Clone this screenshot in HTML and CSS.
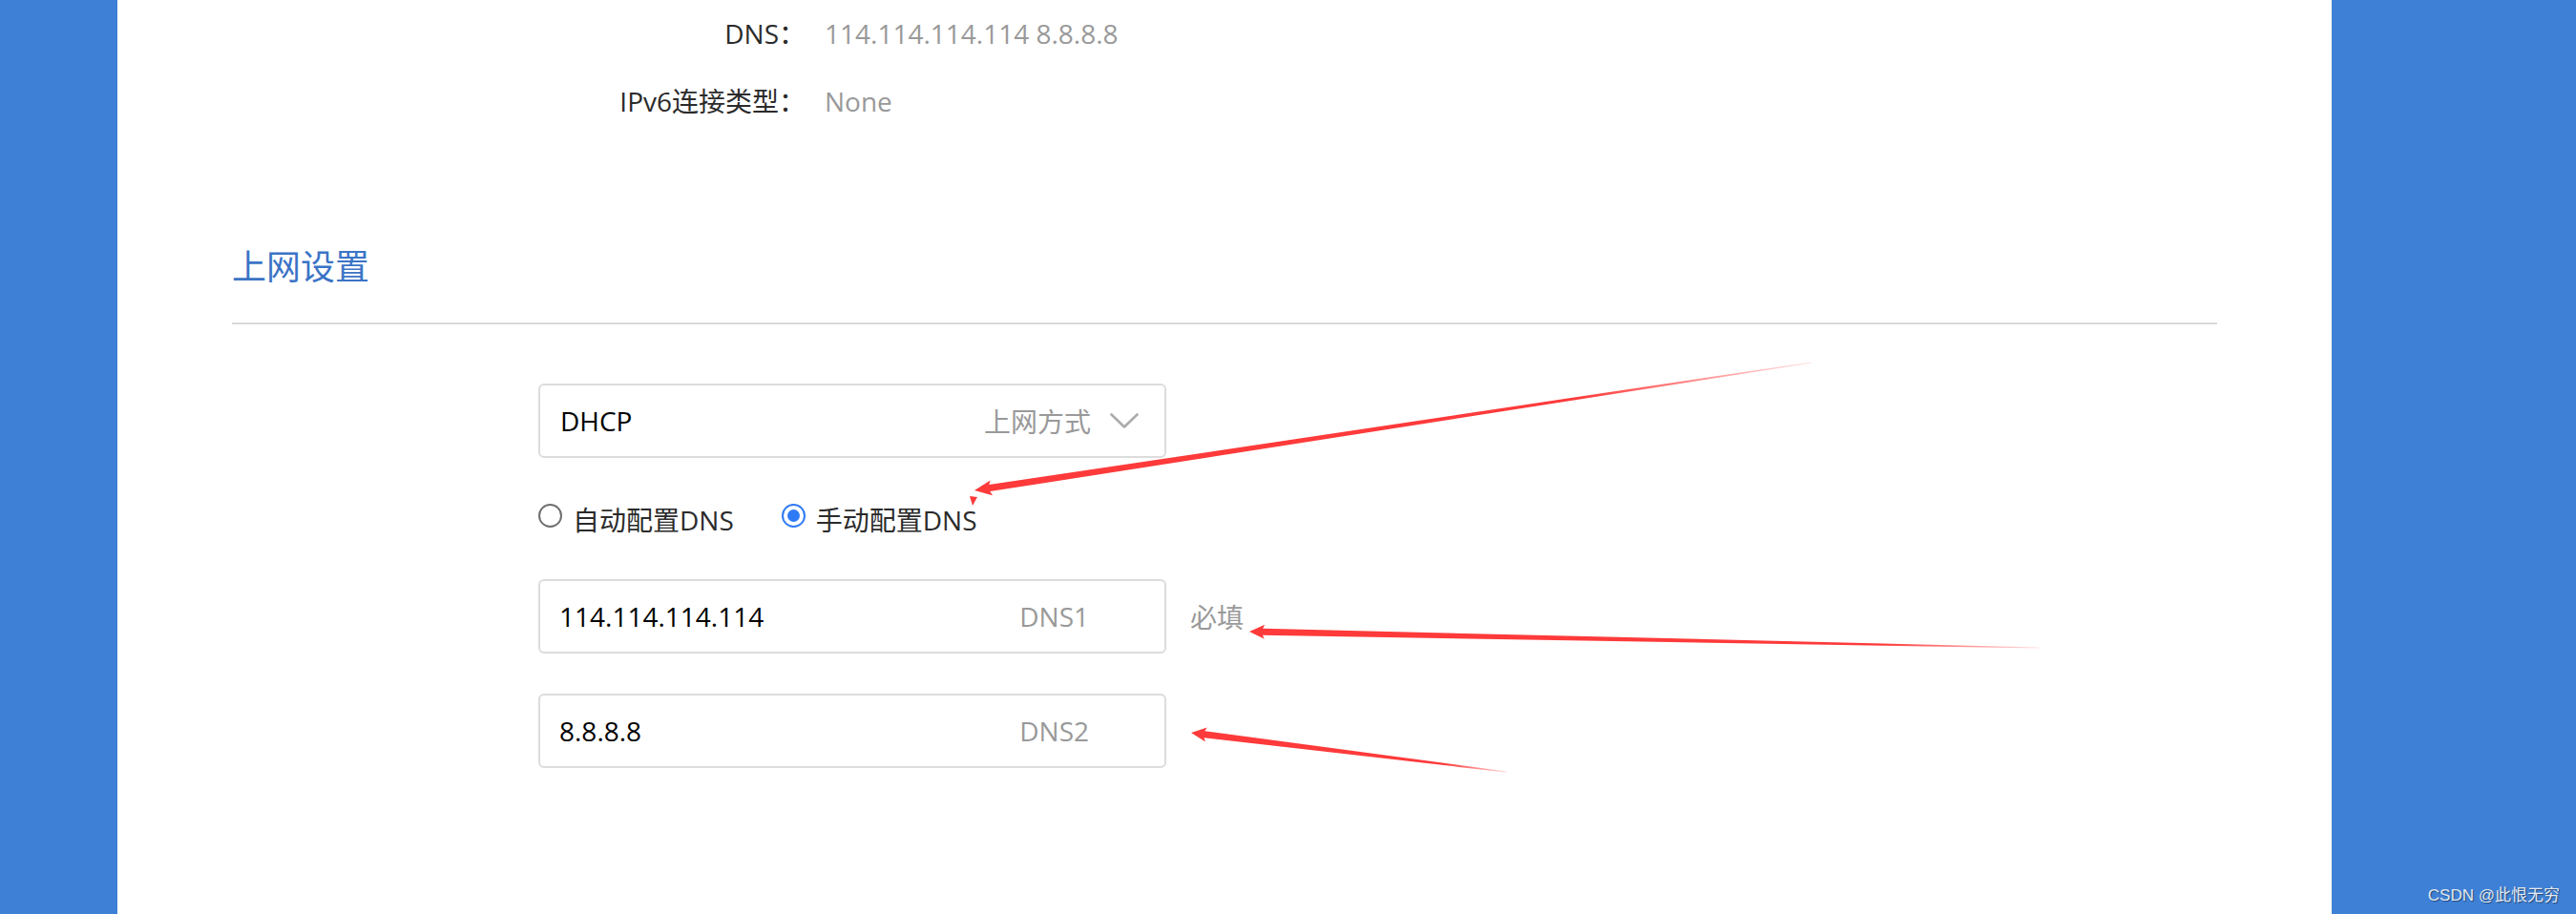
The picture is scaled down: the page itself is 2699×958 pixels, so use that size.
FILE: index.html
```html
<!DOCTYPE html>
<html lang="zh-CN">
<head>
<meta charset="utf-8">
<title>上网设置</title>
<link rel="stylesheet" href="styles.css">
</head>
<body>
<div class="page">
  <div class="info">
    <div class="info-label">DNS：</div>
    <div class="info-value">114.114.114.114 8.8.8.8</div>
    <div class="info-label">IPv6连接类型：</div>
    <div class="info-value">None</div>
  </div>

  <div class="section">
    <h2 class="section-title">上网设置</h2>
  </div>

  <div class="form">
    <div class="select">
      <span class="select-value">DHCP</span>
      <span class="select-ph">上网方式</span>
      <svg class="chevron" width="30" height="16" viewBox="0 0 30 16"><polyline points="1.5,1.5 15,14.5 28.5,1.5" fill="none" stroke="#ababab" stroke-width="2.6" stroke-linecap="round" stroke-linejoin="round"/></svg>
    </div>

    <div class="radios">
      <span class="radio"></span><span class="radio-label">自动配置DNS</span>
      <span class="radio radio-on"><span class="radio-dot"></span></span><span class="radio-label">手动配置DNS</span>
    </div>

    <div class="field">
      <div class="input">
        <span class="input-value">114.114.114.114</span>
        <span class="input-suffix">DNS1</span>
      </div>
      <span class="hint">必填</span>
    </div>

    <div class="field">
      <div class="input">
        <span class="input-value">8.8.8.8</span>
        <span class="input-suffix">DNS2</span>
      </div>
    </div>
  </div>
</div>

<svg class="annot" width="2699" height="958" viewBox="0 0 2699 958">
  <defs>
    <linearGradient id="g1" gradientUnits="userSpaceOnUse" x1="1021" y1="514" x2="1898" y2="380">
      <stop offset="0" stop-color="#fe3a3a" stop-opacity="1"/>
      <stop offset="0.72" stop-color="#fe3a3a" stop-opacity="1"/>
      <stop offset="1" stop-color="#fe3a3a" stop-opacity="0.15"/>
    </linearGradient>
    <linearGradient id="g2" gradientUnits="userSpaceOnUse" x1="1309" y1="662" x2="2136" y2="679">
      <stop offset="0" stop-color="#fe3a3a" stop-opacity="1"/>
      <stop offset="0.8" stop-color="#fe3a3a" stop-opacity="1"/>
      <stop offset="1" stop-color="#fe3a3a" stop-opacity="0.15"/>
    </linearGradient>
    <linearGradient id="g3" gradientUnits="userSpaceOnUse" x1="1248" y1="768" x2="1578" y2="809">
      <stop offset="0" stop-color="#fe3a3a" stop-opacity="1"/>
      <stop offset="0.8" stop-color="#fe3a3a" stop-opacity="1"/>
      <stop offset="1" stop-color="#fe3a3a" stop-opacity="0.2"/>
    </linearGradient>
  </defs>
  <polygon fill="url(#g1)" points="1021,514 1040,519.2 1037.3,515.1 1898,380.6 1898,379.4 1036.3,508.1 1037.6,503.4"/>
  <polygon fill="#fe3a3a" points="1019,530 1016,520 1024,521"/>
  <polygon fill="url(#g2)" points="1309,662 1324.8,669.8 1322.9,665.8 2136,679.6 2136,678.4 1323.1,658.8 1325.2,654.8"/>
  <polygon fill="url(#g3)" points="1248,768 1263,777.4 1261.5,773.2 1578,809.6 1578,808.4 1262.3,766.3 1264.8,762.5"/>
</svg>

<div class="watermark">CSDN @此恨无穷</div>
</body>
</html>
```
FILE: styles.css
```css
html, body {
  margin: 0;
  padding: 0;
}

body {
  position: relative;
  width: 2699px;
  height: 958px;
  overflow: hidden;
  background: #3e80d6;
  font-family: "Open Sans", "Noto Sans CJK SC", sans-serif;
  font-size: 28px;
  color: #2b2b2b;
}

.page {
  margin-left: 123px;
  width: 2320px;
  height: 958px;
  background: #fff;
  box-sizing: border-box;
  padding-top: 15px;
}

.info {
  display: grid;
  grid-template-columns: 721px auto;
  row-gap: 31px;
  line-height: 40px;
}

.info-label {
  text-align: right;
  color: #2b2b2b;
}

.info-value {
  margin-left: 20px;
  color: #999;
}

.section {
  margin: 136px 120px 0;
  padding-bottom: 40px;
  border-bottom: 2px solid #d9d9d9;
}

.section-title {
  margin: 0;
  font-size: 36px;
  line-height: 36px;
  font-weight: normal;
  color: #3b74c6;
}

.form {
  margin-left: 441px;
  padding-top: 62px;
}

.select {
  width: 658px;
  height: 78px;
  box-sizing: border-box;
  border: 2px solid #dcdcdc;
  border-radius: 6px;
  display: flex;
  align-items: center;
  padding: 0 27px 0 21px;
}

.select-value {
  color: #000;
}

.select-ph {
  margin-left: auto;
  color: #999;
}

.chevron {
  margin-left: 20px;
  display: block;
}

.radios {
  margin-top: 45px;
  height: 40px;
  line-height: 40px;
  display: flex;
  align-items: flex-start;
}

.radio {
  width: 25px;
  height: 25px;
  margin-top: 3px;
  box-sizing: border-box;
  border: 2px solid #6f6f6f;
  border-radius: 50%;
  background: #fff;
  display: flex;
  align-items: center;
  justify-content: center;
}

.radio-on {
  margin-left: 50px;
  border-color: #2f7bf5;
}

.radio-dot {
  width: 13px;
  height: 13px;
  border-radius: 50%;
  background: #2f7bf5;
}

.radio-label {
  margin-left: 11px;
  color: #2b2b2b;
}

.field {
  margin-top: 42px;
  display: flex;
  align-items: center;
}

.input {
  width: 658px;
  height: 78px;
  box-sizing: border-box;
  border: 2px solid #dcdcdc;
  border-radius: 6px;
  display: flex;
  align-items: center;
  padding: 0 79px 0 20px;
}

.input-value {
  color: #000;
}

.input-suffix {
  margin-left: auto;
  color: #999;
}

.hint {
  margin-left: 25px;
  color: #999;
}

.annot {
  position: absolute;
  left: 0;
  top: 0;
  pointer-events: none;
}

.watermark {
  position: absolute;
  right: 17px;
  bottom: 9px;
  font-family: "Liberation Sans", "Noto Sans CJK SC", sans-serif;
  font-size: 17px;
  line-height: 20px;
  color: #e3e9f1;
  text-shadow: 1px 1px 1px rgba(0, 0, 0, 0.45);
}
```
